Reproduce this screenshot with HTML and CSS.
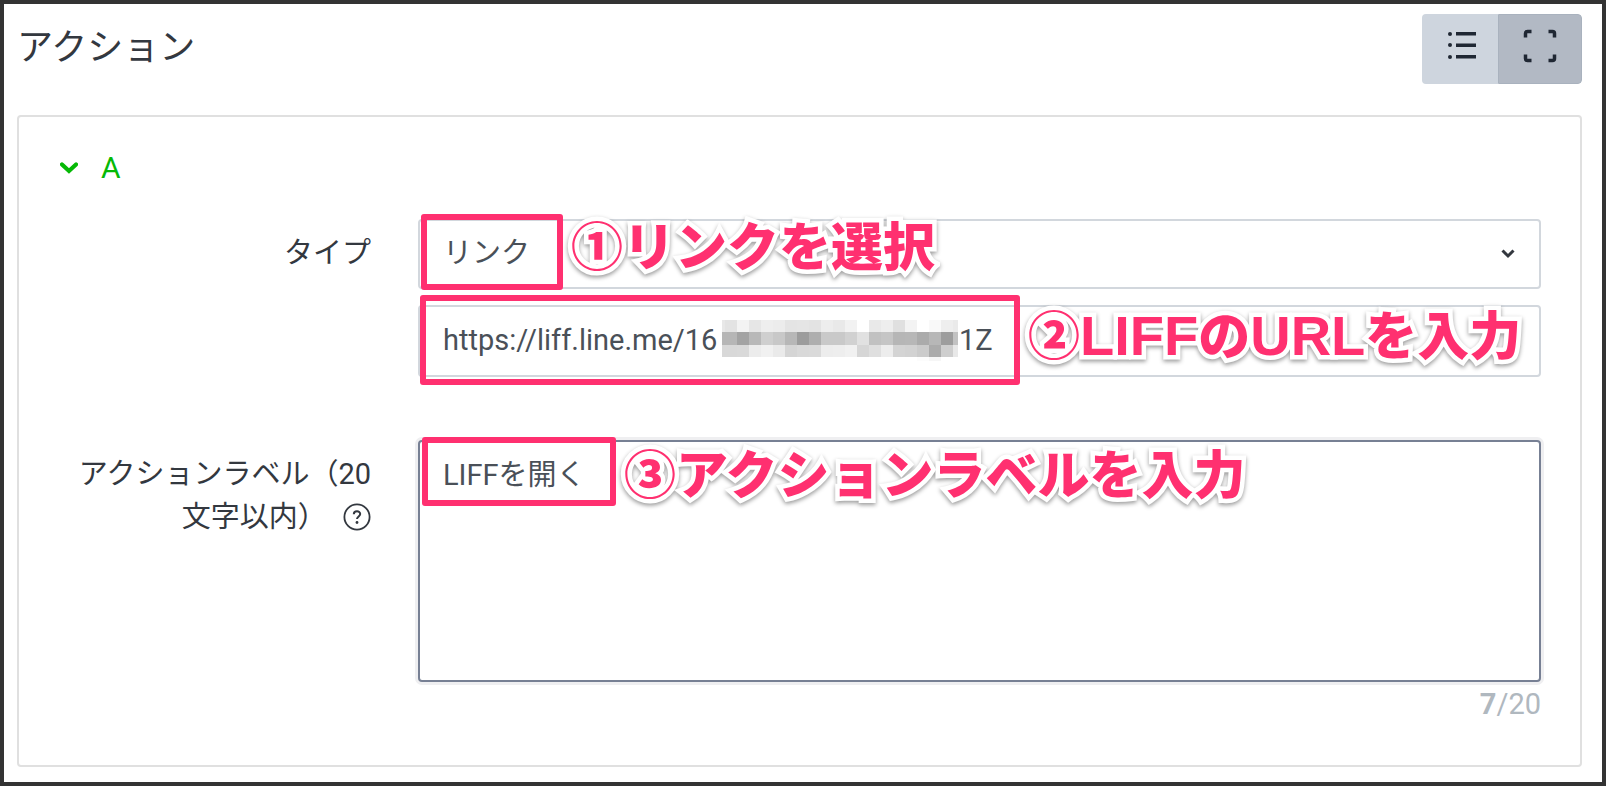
FILE: index.html
```html
<!DOCTYPE html>
<html lang="ja">
<head>
<meta charset="utf-8">
<meta name="viewport" content="width=device-width, initial-scale=1">
<title>アクション</title>
<link rel="stylesheet" href="styles.css">
</head>
<body>
<main class="panel">
  <header class="panel-head">
    <h1 class="title">アクション</h1>
    <div class="toggle" role="group" aria-label="表示">
      <button class="toggle-btn" type="button" aria-label="リスト">
        <svg width="28" height="28" viewBox="0 0 28 28"><g fill="#1f2733"><circle cx="2" cy="3" r="2"/><circle cx="2" cy="14" r="2"/><circle cx="2" cy="26" r="2"/><path d="M8 1h20v3.500H8zM8 12.500h20V16H8zM8 24h20v3.500H8z"/></g></svg>
      </button>
      <button class="toggle-btn active" type="button" aria-label="全画面" aria-pressed="true">
        <svg width="34" height="34" viewBox="0 0 34 34"><path d="M8.500 2.500H4.500q-2 0-2 2v4M25.500 2.500h4q2 0 2 2v4M8.500 31.500H4.500q-2 0-2-2v-4M25.500 31.500h4q2 0 2-2v-4" fill="none" stroke="#1f2733" stroke-width="3.500"/></svg>
      </button>
    </div>
  </header>

  <section class="card">
    <button class="section-toggle" type="button" aria-expanded="true">
      <svg width="18" height="12" viewBox="0 0 18 12"><path d="M2 2.500l7 6.500 7-6.500" fill="none" stroke="#06b906" stroke-width="4.200" stroke-linecap="round"/></svg>
      <span>A</span>
    </button>

    <form class="form">
      <label class="label" for="type">タイプ</label>
      <div class="field">
        <select class="control select" id="type"><option>リンク</option></select>
        <svg class="caret" width="14" height="10" viewBox="0 0 14 10"><path d="M1.500 1.500L7 7l5.500-5.500" fill="none" stroke="#33383f" stroke-width="3"/></svg>
        <div class="note note-type"><span class="mark mark-type"></span><span class="note-text">①リンクを選択</span></div>
      </div>

      <div class="field field-url">
        <input class="control url" type="text" aria-label="URL" value="https://liff.line.me/16">
        <div class="masked">
          <svg width="236" height="41" viewBox="0 0 236 41" shape-rendering="crispEdges" id="mosaic"></svg>
          <span>1Z</span>
        </div>
        <div class="note note-url"><span class="mark mark-url"></span><span class="note-text">②<span class="latin">LIFF</span>の<span class="latin">URL</span>を入力</span></div>
      </div>

      <label class="label" for="label">アクションラベル（20文字以内）
        <svg class="help" width="28" height="28" viewBox="0 0 28 28"><circle cx="14" cy="14" r="12.600" fill="none" stroke="#33383f" stroke-width="1.800"/><path d="M10.800 11.300c0-4 6.400-4 6.400-.2 0 2.300-3.200 2.500-3.200 5" fill="none" stroke="#33383f" stroke-width="2"/><circle cx="14" cy="19.500" r="1.400" fill="#33383f"/></svg>
      </label>
      <div class="field">
        <textarea class="control area" id="label">LIFFを開く</textarea>
        <p class="count"><b>7</b>/20</p>
        <div class="note note-label"><span class="mark mark-label"></span><span class="note-text">③アクションラベルを入力</span></div>
      </div>
    </form>
  </section>
</main>
<script src="mosaic.js"></script>
</body>
</html>
```
FILE: mosaic.js
```js
const rows = [
  { y: 0, h: 12, c: 'e8 e3 f3 e6 ee ec e4 e5 e3 ed e9 f2 ff e9 ee e0 f3 ff f9 ee ea' },
  { y: 12, h: 13, c: 'b6 b6 a3 b8 cf c8 b7 9c ae c9 c9 d1 e1 c1 c5 b6 b7 ab b7 9d c2' },
  { y: 25, h: 12, c: 'd8 d8 d9 ec f1 ea d5 d9 da ed ee f1 d6 df ed d4 d2 cb ab ce e8' },
  { y: 37, h: 4, c: 'ff ff ff ff ff ff ff ff ff ff ff ff ff ff ff ff ff fc f6 ff ff' }
];
const svg = document.getElementById('mosaic');
rows.forEach(row => row.c.split(' ').forEach((v, i) => {
  const r = document.createElementNS('http://www.w3.org/2000/svg', 'rect');
  r.setAttribute('x', i === 0 ? 0 : 3 + (i - 1) * 12);
  r.setAttribute('y', row.y);
  r.setAttribute('width', i === 0 ? 3 : 12);
  r.setAttribute('height', row.h);
  r.setAttribute('fill', '#' + v + v + v);
  svg.appendChild(r);
}));
```
FILE: styles.css
```css
* { box-sizing: border-box; }
body {
  margin: 0;
  color: #33383f;
  font: 29px/43px Roboto, "Noto Sans CJK JP", sans-serif;
}
.panel {
  min-height: 100vh;
  padding: 10px 20px 15px 13px;
  border: 4px solid #333;
  background: #fff;
}
.panel-head {
  display: flex;
  justify-content: space-between;
  align-items: flex-start;
  margin-bottom: 31px;
}
.title { margin: 0; font-size: 36px; line-height: 68px; font-weight: 400; }
.toggle { display: flex; border-radius: 4px; overflow: hidden; }
.toggle-btn {
  display: flex;
  align-items: center;
  justify-content: center;
  width: 76px;
  height: 70px;
  padding: 0 0 8px 4px;
  border: 0;
  background: #ced5de;
}
.toggle-btn.active {
  width: 84px;
  padding: 0 0 6px;
  border: 1px solid #a9b2be;
  border-radius: 0 4px 4px 0;
  background: #b2b9c4;
}
.card {
  padding: 29px 39px 39px 41px;
  border: 2px solid #e0e0e0;
  border-radius: 4px;
}
.section-toggle {
  display: flex;
  align-items: center;
  gap: 23px;
  padding: 0;
  border: 0;
  background: none;
  color: #06b906;
  font: inherit;
  font-size: 30px;
}
.form {
  display: grid;
  grid-template-columns: 311px 1fr;
  column-gap: 47px;
  margin-top: 30px;
}
.label { padding-top: 13px; text-align: right; }
.help { margin-left: 9px; vertical-align: -4px; }
.field { position: relative; }
.field-url { grid-column: 2; margin: 16px 0 63px; }
.control {
  display: block;
  width: 100%;
  height: 72px;
  padding: 0 23px;
  border: 2px solid #d2d7dd;
  border-radius: 4px;
  outline: 0;
  background: #fff;
  color: #4a5058;
  font: inherit;
}
.select { height: 70px; padding-bottom: 2px; appearance: none; }
.url { padding-bottom: 2px; }
.caret { position: absolute; right: 26px; top: 30px; }
.area {
  height: 242px;
  padding: 12px 23px;
  border-color: #778094;
  box-shadow: 0 0 0 3px #efeff1;
  resize: none;
}
.count { margin: 0; padding-top: 1px; color: #b0b8bf; text-align: right; }
.masked {
  position: absolute;
  left: 304px;
  top: 15px;
  display: flex;
  gap: 1px;
  color: #4a5058;
  line-height: 41px;
}
.note {
  position: absolute;
  display: flex;
  align-items: center;
  gap: 8px;
  white-space: nowrap;
  pointer-events: none;
}
.mark { border: 6px solid #ff3070; border-radius: 3px; }
.note-type { left: 3px; top: -5px; }
.mark-type { width: 142px; height: 76px; }
.note-url { left: 2px; top: -10px; }
.mark-url { width: 600px; height: 90px; }
.note-label { left: 4px; top: -3px; }
.mark-label { width: 194px; height: 69px; }
.note-text {
  color: #ff3070;
  font: 900 52px/52px "Noto Sans CJK JP", sans-serif;
  -webkit-text-stroke: 9px #fff;
  paint-order: stroke fill;
  filter: drop-shadow(0 2px 2px rgba(0, 0, 0, 0.4));
}
.note-type .note-text { padding-bottom: 16px; }
.note-url .note-text { padding-bottom: 12px; }
.latin { font-family: "Liberation Sans", sans-serif; font-size: 56px; font-weight: 700; }
```
